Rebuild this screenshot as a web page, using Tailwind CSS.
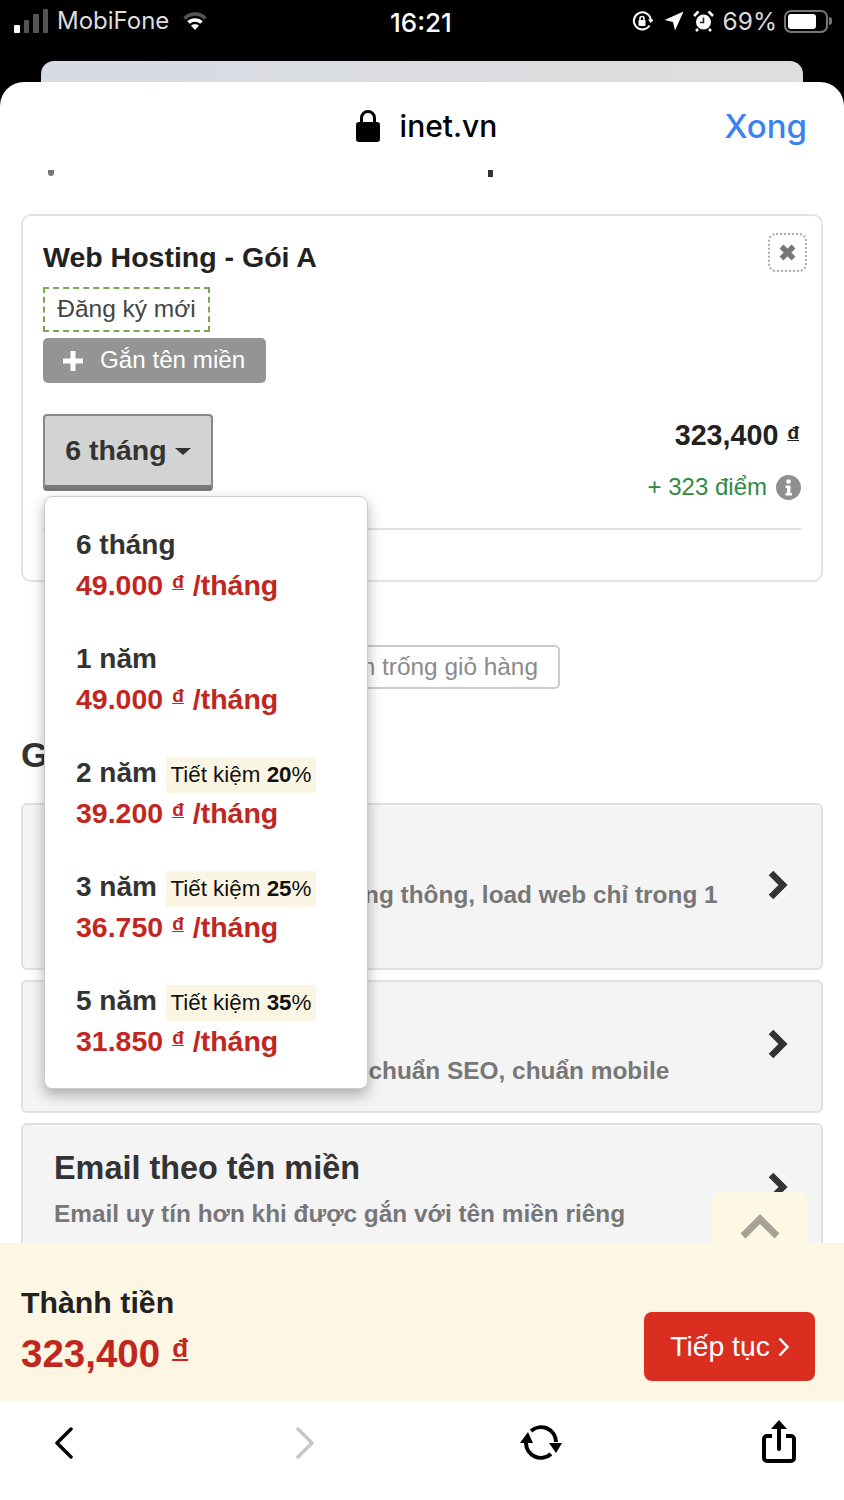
<!DOCTYPE html>
<html lang="en">
<head>
    <meta charset="UTF-8">
    <meta name="viewport" content="width=device-width, initial-scale=1.0">
    <title>inet.vn - Giỏ hàng</title>
    <script src="https://cdn.jsdelivr.net/npm/@tailwindcss/browser@4"></script>
</head>
<body class="bg-black">
    <div class="w-[844px] h-[1500px] bg-black overflow-hidden flex flex-col font-['Liberation_Sans',sans-serif]">
        <!-- Status bar -->
        <div class="h-[42px] shrink-0 flex items-center px-[14px] text-white font-['Inter',sans-serif] text-[24px] relative">
            <div class="flex items-end gap-[4px] h-[24px] w-[34px]">
                <div class="w-[6px] h-[8px] bg-white rounded-[1px]"></div>
                <div class="w-[6px] h-[13px] bg-[#555] rounded-[1px]"></div>
                <div class="w-[6px] h-[19px] bg-[#555] rounded-[1px]"></div>
                <div class="w-[6px] h-[24px] bg-[#555] rounded-[1px]"></div>
            </div>
            <span class="ml-[9px] text-[#ddd]">MobiFone</span>
            <svg class="ml-[14px] w-[24px] h-[22px]" viewBox="0 0 24 22" fill="none">
                <path d="M1.5 8.5C7.5 2.5 16.5 2.5 22.5 8.5" stroke="#555" stroke-width="3.5"/>
                <path d="M5.5 12.5C9 9 15 9 18.5 12.5" stroke="#fff" stroke-width="3.5"/>
                <path d="M8 15.5C10 13.700 14 13.700 16 15.5L12 20Z" fill="#fff"/>
            </svg>
            <span class="absolute left-[390px] top-[3px] text-[26px] font-medium text-white">16:21</span>
            <div class="ml-auto flex items-center">
                <svg class="w-[21px] h-[21px]" viewBox="0 0 21 21" fill="none">
                    <path d="M17.5 14.5A8.5 8.5 0 1 1 18.8 9" stroke="#fff" stroke-width="2"/>
                    <path d="M16 8.5h5.5L18.7 12Z" fill="#fff"/>
                    <rect x="6.5" y="9" width="7" height="6" rx="1" fill="#fff"/>
                    <path d="M8 9V7.5a2 2 0 0 1 4 0V9" stroke="#fff" stroke-width="1.5"/>
                </svg>
                <svg class="ml-[11px] w-[20px] h-[20px]" viewBox="0 0 20 20"><path d="M19.5 .5L11 19.5 9 11 .5 9Z" fill="#fff"/></svg>
                <svg class="ml-[9px] w-[21px] h-[22px]" viewBox="0 0 21 22" fill="none">
                    <circle cx="10.500" cy="12" r="7.500" fill="#fff"/>
                    <path d="M10.500 7.500V12.500H7" stroke="#222" stroke-width="1.600"/>
                    <path d="M1 6L5.500 1.500M20 6L15.500 1.500M5 19l-2 2M16 19l2 2" stroke="#fff" stroke-width="2.500"/>
                </svg>
                <span class="ml-[9px] text-[24.500px] text-[#ddd]">69%</span>
                <div class="ml-[7px] w-[44px] h-[23px] rounded-[7px] border-2 border-[#777] p-[2px]">
                    <div class="w-[28px] h-full bg-white rounded-[3px]"></div>
                </div>
                <div class="w-[3px] h-[8px] ml-[1px] mr-[-2px] bg-[#777] rounded-r-full"></div>
            </div>
        </div>

        <!-- Sheet behind -->
        <div class="mt-[19px] mx-[41px] h-[21px] shrink-0 rounded-t-[13px] bg-gradient-to-r from-[#d7dbe3] to-[#dedede]"></div>

        <!-- Main sheet -->
        <div class="flex-1 min-h-0 bg-white rounded-t-[24px] flex flex-col">
            <!-- Safari header -->
            <div class="h-[86px] shrink-0 relative flex items-center justify-center pl-[9px] font-['Inter',sans-serif]">
                <svg class="w-[24px] h-[32px] mr-[20px] mt-[1px]" viewBox="0 0 24 32" fill="none">
                    <rect x="0" y="12" width="24" height="20" rx="3" fill="#000"/>
                    <path d="M5.500 13V8a6.500 6.500 0 0 1 13 0v5" stroke="#000" stroke-width="3"/>
                </svg>
                <span class="text-[30px] mt-[3px] font-medium text-black">inet.vn</span>
                <span class="absolute right-[37px] top-[20px] text-[33px] font-medium text-[#3b82f0]">Xong</span>
            </div>

            <!-- Scrolled page content -->
            <div class="flex-1 min-h-0 overflow-hidden relative">
                <div class="h-[8px] flex items-start">
                    <div class="ml-[48px] mt-[2px] w-[6px] h-[6px] bg-[#777] rounded-b-[3px]"></div>
                    <div class="ml-[434px] mt-[2px] w-[5px] h-[7px] bg-[#333]"></div>
                </div>

                <!-- Cart item -->
                <div class="relative mt-[38px] mx-[21px] h-[368px] border-2 border-[#e3e3e3] rounded-[10px] px-[20px] pt-[23px]">
                    <h2 class="text-[28.500px] leading-[36px] font-bold text-[#222]">Web Hosting - Gói A</h2>
                    <div class="mt-[12px] w-[167px] h-[45px] border-2 border-dashed border-[#7aa655] flex items-center justify-center text-[24.500px] text-[#444]">Đăng ký mới</div>
                    <div class="mt-[6px] w-[223px] h-[45px] bg-[#949494] rounded-[5px] flex items-center pl-[20px] text-[24.200px] text-white">
                        <svg class="w-[20px] h-[20px] mr-[17px]" viewBox="0 0 20 20"><path d="M7.500 0h5v7.500H20v5h-7.500V20h-5v-7.500H0v-5h7.500Z" fill="#fff"/></svg>
                        Gắn tên miền
                    </div>

                    <div class="mt-[31px] flex justify-between items-start">
                        <div class="relative">
                            <div class="w-[170px] h-[77px] bg-[#d3d3d3] border-2 border-[#888] border-b-[6px] border-b-[#777] rounded-[4px] flex items-center justify-center text-[28.500px] font-bold text-[#333]">
                                6 tháng
                                <span class="ml-[8px] mt-[2px] w-0 h-0 border-x-[8px] border-x-transparent border-t-[7px] border-t-[#333]"></span>
                            </div>

                            <!-- Period menu -->
                            <div class="absolute z-10 left-[1px] top-[82px] w-[324px] h-[593px] bg-white border border-[#ccc] rounded-[8px] shadow-[0_6px_14px_rgba(0,0,0,0.3)] pl-[31px] pt-[27px] flex flex-col gap-[32px]">
                                <div class="h-[82px]">
                                    <div class="h-[41px] flex items-center text-[28px] font-bold text-[#333]">6 tháng</div>
                                    <div class="h-[41px] flex items-center text-[28.500px] font-bold text-[#c0271e]">49.000<span class="ml-[9px] mr-[9px] mb-[6px] text-[19px] underline">đ</span>/tháng</div>
                                </div>
                                <div class="h-[82px]">
                                    <div class="h-[41px] flex items-center text-[28px] font-bold text-[#333]">1 năm</div>
                                    <div class="h-[41px] flex items-center text-[28.500px] font-bold text-[#c0271e]">49.000<span class="ml-[9px] mr-[9px] mb-[6px] text-[19px] underline">đ</span>/tháng</div>
                                </div>
                                <div class="h-[82px]">
                                    <div class="h-[41px] flex items-center text-[28px] font-bold text-[#333]">2 năm<span class="ml-[9px] mt-[5px] h-[36px] w-[150px] bg-[#fbf6e3] flex items-center justify-center text-[22.400px] font-normal text-[#111]">Tiết kiệm&nbsp;<b>20</b>%</span></div>
                                    <div class="h-[41px] flex items-center text-[28.500px] font-bold text-[#c0271e]">39.200<span class="ml-[9px] mr-[9px] mb-[6px] text-[19px] underline">đ</span>/tháng</div>
                                </div>
                                <div class="h-[82px]">
                                    <div class="h-[41px] flex items-center text-[28px] font-bold text-[#333]">3 năm<span class="ml-[9px] mt-[5px] h-[36px] w-[150px] bg-[#fbf6e3] flex items-center justify-center text-[22.400px] font-normal text-[#111]">Tiết kiệm&nbsp;<b>25</b>%</span></div>
                                    <div class="h-[41px] flex items-center text-[28.500px] font-bold text-[#c0271e]">36.750<span class="ml-[9px] mr-[9px] mb-[6px] text-[19px] underline">đ</span>/tháng</div>
                                </div>
                                <div class="h-[82px]">
                                    <div class="h-[41px] flex items-center text-[28px] font-bold text-[#333]">5 năm<span class="ml-[9px] mt-[5px] h-[36px] w-[150px] bg-[#fbf6e3] flex items-center justify-center text-[22.400px] font-normal text-[#111]">Tiết kiệm&nbsp;<b>35</b>%</span></div>
                                    <div class="h-[41px] flex items-center text-[28.500px] font-bold text-[#c0271e]">31.850<span class="ml-[9px] mr-[9px] mb-[6px] text-[19px] underline">đ</span>/tháng</div>
                                </div>
                            </div>
                        </div>
                        <div class="flex flex-col items-end">
                            <div class="mt-[-1px] mr-[2px] text-[28.700px] leading-[40px] font-bold text-[#222]">323,400<span class="ml-[9px] text-[19px] underline align-[6px]">đ</span></div>
                            <div class="mt-[14px] flex items-center text-[24px] text-[#2f8a45]">
                                + 323 điểm
                                <svg class="ml-[9px] w-[25px] h-[25px]" viewBox="0 0 25 25">
                                    <circle cx="12.500" cy="12.500" r="12.500" fill="#8f8f8f"/>
                                    <circle cx="12.500" cy="6.500" r="2.300" fill="#fff"/>
                                    <path d="M9.500 10.500h5V18h1.500v2.500H9.500V18H11v-5H9.500Z" fill="#fff"/>
                                </svg>
                            </div>
                        </div>
                    </div>
                    <div class="mt-[23px] h-[2px] bg-[#e3e3e3]"></div>

                    <!-- Remove -->
                    <div class="absolute right-[14px] top-[17px] w-[39px] h-[39px] border-2 border-dotted border-[#aaa] rounded-[8px] flex items-center justify-center">
                        <svg class="w-[17px] h-[17px]" viewBox="0 0 17 17"><path d="M2.500 2.500L14.500 14.500M14.500 2.500L2.500 14.500" stroke="#777" stroke-width="5.500"/></svg>
                    </div>
                </div>

                <!-- Empty cart -->
                <div class="mt-[63px] ml-[300px] w-[260px] h-[44px] border-2 border-[#ccc] rounded-[5px] flex items-center justify-end pr-[20px] text-[24.400px] text-[#8a8a8a]">Làm trống giỏ hàng</div>

                <h2 class="mt-[46px] ml-[21px] h-[40px] text-[35px] leading-[40px] font-bold text-[#333]">Gợi ý</h2>

                <!-- Suggested services -->
                <div class="mt-[28px] mx-[21px] flex flex-col gap-[10px]">
                    <div class="h-[167px] bg-[#f4f4f5] border-2 border-[#e0e0e0] rounded-[6px] pl-[31px] pr-[32px] pt-[21px] flex">
                        <div class="w-[690px]">
                            <div class="text-[32.400px] leading-[44px] font-bold text-[#333]">Web Hosting</div>
                            <div class="mt-[5px] text-[24.400px] leading-[40px] font-bold text-[#777]">Ổn định không giới hạn băng thông, load web chỉ trong 1 giây</div>
                        </div>
                        <svg class="ml-auto mt-[44px] w-[22px] h-[30px]" viewBox="0 0 22 30" fill="none"><path d="M4 3L16 15 4 27" stroke="#333" stroke-width="6.500"/></svg>
                    </div>
                    <div class="h-[133px] bg-[#f4f4f5] border-2 border-[#e0e0e0] rounded-[6px] pl-[31px] pr-[32px] pt-[21px] flex">
                        <div class="w-[690px]">
                            <div class="text-[32.400px] leading-[44px] font-bold text-[#333]">Thiết kế web</div>
                            <div class="mt-[4px] text-[24.400px] leading-[40px] font-bold text-[#777]">Giao diện website đẹp mắt chuẩn SEO, chuẩn mobile</div>
                        </div>
                        <svg class="ml-auto mt-[26px] w-[22px] h-[30px]" viewBox="0 0 22 30" fill="none"><path d="M4 3L16 15 4 27" stroke="#333" stroke-width="6.500"/></svg>
                    </div>
                    <div class="h-[160px] bg-[#f4f4f5] border-2 border-[#e0e0e0] rounded-[6px] pl-[31px] pr-[32px] pt-[21px] flex">
                        <div class="w-[690px]">
                            <div class="text-[32.400px] leading-[44px] font-bold text-[#333]">Email theo tên miền</div>
                            <div class="mt-[4px] text-[24.400px] leading-[40px] font-bold text-[#777]">Email uy tín hơn khi được gắn với tên miền riêng</div>
                        </div>
                        <svg class="ml-auto mt-[26px] w-[22px] h-[30px]" viewBox="0 0 22 30" fill="none"><path d="M4 3L16 15 4 27" stroke="#333" stroke-width="6.500"/></svg>
                    </div>
                </div>

                <!-- Back to top -->
                <div class="absolute right-[37px] bottom-0 w-[95px] h-[51px] bg-[#fdf8e3] rounded-t-[8px] flex justify-center pt-[22px]">
                    <svg class="w-[40px] h-[26px]" viewBox="0 0 40 26" fill="none"><path d="M3 22L20 5 37 22" stroke="#a8a294" stroke-width="7"/></svg>
                </div>
            </div>

            <!-- Total bar -->
            <div class="h-[158px] shrink-0 bg-[#fdf6e3] flex items-end justify-between pl-[21px] pr-[29px] pb-[20px]">
                <div>
                    <div class="text-[30.300px] leading-[40px] font-bold text-[#222]">Thành tiền</div>
                    <div class="mt-[1px] mb-[3px] text-[38.500px] leading-[48px] font-bold text-[#c0271e]">323,400<span class="ml-[12px] text-[26px] underline align-[10px]">đ</span></div>
                </div>
                <button class="w-[171px] h-[69px] bg-[#d92e20] rounded-[8px] flex items-center justify-center text-[28.300px] text-white">
                    Tiếp tục
                    <svg class="ml-[8px] w-[11px] h-[20px]" viewBox="0 0 11 20" fill="none"><path d="M1.500 1.500L9.500 10 1.500 18.500" stroke="#fff" stroke-width="2.500"/></svg>
                </button>
            </div>

            <!-- Safari toolbar -->
            <div class="h-[99px] shrink-0 bg-white relative flex items-start pt-[19px] pl-[55px]">
                <svg class="w-[18px] h-[32px] mt-[7px]" viewBox="0 0 18 32" fill="none"><path d="M16 2L2 16 16 30" stroke="#000" stroke-width="3.500" stroke-linecap="round" stroke-linejoin="round"/></svg>
                <svg class="ml-[223px] w-[18px] h-[32px] mt-[7px]" viewBox="0 0 18 32" fill="none"><path d="M2 2L16 16 2 30" stroke="#c6c6cb" stroke-width="3.500" stroke-linecap="round" stroke-linejoin="round"/></svg>
                <svg class="ml-[206px] w-[44px] h-[36px] mt-[5px]" viewBox="0 0 44 36" fill="none">
                    <path d="M11 6A15 15 0 0 1 36 17" stroke="#000" stroke-width="4"/>
                    <path d="M31 29A15 15 0 0 1 6 18" stroke="#000" stroke-width="4"/>
                    <path d="M0 18H13L8 7Z" fill="#000"/>
                    <path d="M29 18H42L36 28Z" fill="#000"/>
                </svg>
                <svg class="ml-[198px] w-[34px] h-[43px]" viewBox="0 0 34 43" fill="none">
                    <path d="M10 16H5a3 3 0 0 0-3 3v19a3 3 0 0 0 3 3h24a3 3 0 0 0 3-3V19a3 3 0 0 0-3-3h-5" stroke="#000" stroke-width="4"/>
                    <path d="M17 4V29" stroke="#000" stroke-width="4" stroke-linecap="round"/>
                    <path d="M17 0L25 9H9Z" fill="#000"/>
                </svg>
            </div>
        </div>
    </div>
</body>
</html>
